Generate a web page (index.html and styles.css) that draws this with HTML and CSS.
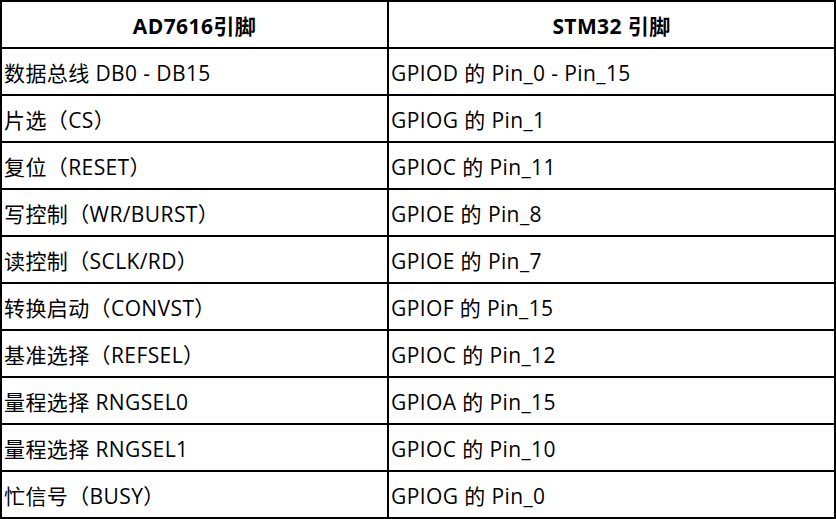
FILE: index.html
```html
<!DOCTYPE html>
<html lang="zh-CN">
<head>
<meta charset="utf-8">
<link rel="stylesheet" href="styles.css">
</head>
<body>
<table class="pins">
  <thead>
    <tr><th class="c1">AD7616引脚</th><th class="c2">STM32 引脚</th></tr>
  </thead>
  <tbody>
    <tr><td>数据总线 DB0 - DB15</td><td>GPIOD 的 Pin_0 - Pin_15</td></tr>
    <tr><td>片选（CS）</td><td>GPIOG 的 Pin_1</td></tr>
    <tr><td>复位（RESET）</td><td>GPIOC 的 Pin_11</td></tr>
    <tr><td>写控制（WR/BURST）</td><td>GPIOE 的 Pin_8</td></tr>
    <tr><td>读控制（SCLK/RD）</td><td>GPIOE 的 Pin_7</td></tr>
    <tr><td>转换启动（CONVST）</td><td>GPIOF 的 Pin_15</td></tr>
    <tr><td>基准选择（REFSEL）</td><td>GPIOC 的 Pin_12</td></tr>
    <tr><td>量程选择 RNGSEL0</td><td>GPIOA 的 Pin_15</td></tr>
    <tr><td>量程选择 RNGSEL1</td><td>GPIOC 的 Pin_10</td></tr>
    <tr><td>忙信号（BUSY）</td><td>GPIOG 的 Pin_0</td></tr>
  </tbody>
</table>
</body>
</html>
```
FILE: styles.css
```css
html, body {
  margin: 0;
  padding: 0;
  background: #fff;
}
.pins {
  border-collapse: separate;
  border-spacing: 0;
  border-top: 2px solid #000;
  border-left: 2px solid #000;
  width: 836px;
  table-layout: fixed;
  font-family: "Open Sans", "Noto Sans CJK SC", sans-serif;
  font-size: 21px;
  letter-spacing: 0.4px;
  color: #000;
}
.pins th, .pins td {
  border-right: 2px solid #000;
  border-bottom: 2px solid #000;
  height: 47px;
  padding: 0 2px;
  box-sizing: border-box;
  vertical-align: middle;
  white-space: nowrap;
}
.pins th {
  font-weight: bold;
  text-align: center;
}
.pins td {
  text-align: left;
}
.c1 { width: 387px; }
.c2 { width: 447px; }
```
